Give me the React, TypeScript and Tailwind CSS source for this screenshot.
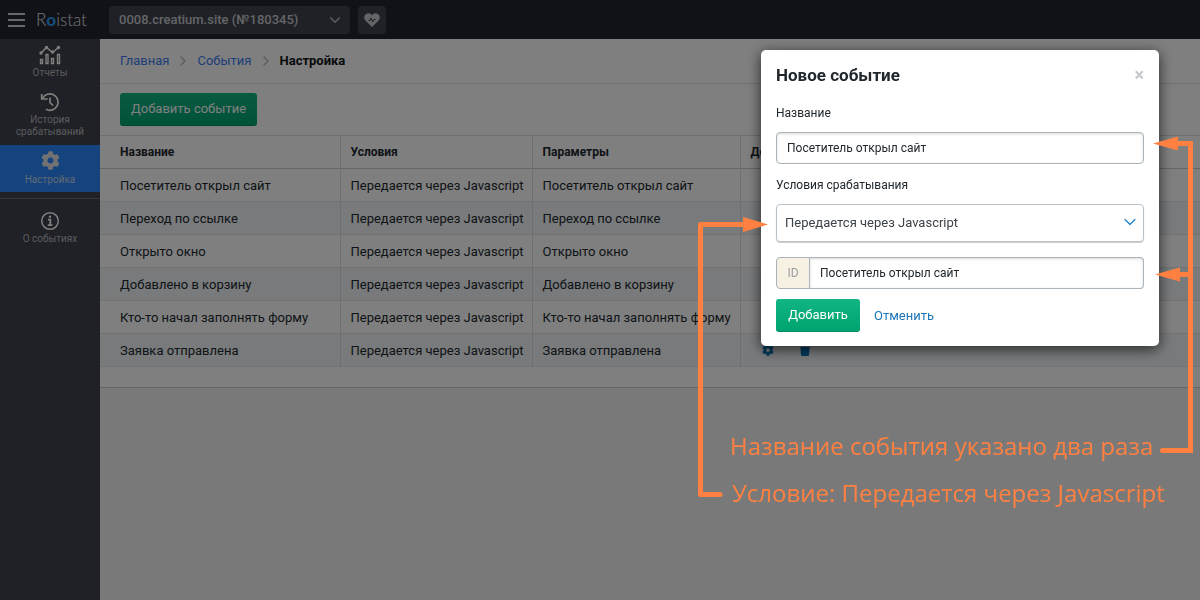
import { ChevronDown, ChevronRight } from 'lucide-react'
import { FaCog, FaTrash } from 'react-icons/fa'

const events = [
  'Посетитель открыл сайт',
  'Переход по ссылке',
  'Открыто окно',
  'Добавлено в корзину',
  'Кто-то начал заполнять форму',
  'Заявка отправлена',
]

function ReportsIcon() {
  return (
    <svg width="22" height="20" viewBox="0 0 22 20" fill="none" stroke="currentColor" strokeWidth="1.4">
      <path d="M1.5 14.5h2v4h-2zM7 9.500h2v9h-2zM12.500 13.500h2v5h-2zM18.500 9.500h2v9h-2z" />
      <path d="M2 8 7.500 2.500l6 5 6-5" strokeWidth="1.6" />
      <circle cx="2" cy="8" r="1.7" fill="currentColor" stroke="none" />
      <circle cx="7.5" cy="2.5" r="1.7" fill="currentColor" stroke="none" />
      <circle cx="13.5" cy="7" r="1.7" fill="currentColor" stroke="none" />
      <circle cx="19.5" cy="2.5" r="1.7" fill="currentColor" stroke="none" />
    </svg>
  )
}

function HistoryIcon() {
  return (
    <svg width="20" height="20" viewBox="0 0 20 20" fill="none" stroke="currentColor" strokeWidth="1.7">
      <path d="M2.500 6.500A8.200 8.200 0 1 1 6 17.300" />
      <path d="M1.700 2v5h6" />
      <path d="M10 5.500v5l3 3" />
    </svg>
  )
}

function InfoIcon() {
  return (
    <svg width="20" height="20" viewBox="0 0 20 20" fill="none" stroke="currentColor" strokeWidth="1.5">
      <circle cx="10" cy="10" r="8.3" />
      <path d="M8 8.700h2.300v5M7.800 14.200h4.600" strokeWidth="1.8" />
      <circle cx="10" cy="5.8" r="1.2" fill="currentColor" stroke="none" />
    </svg>
  )
}

function HeartPulseIcon() {
  return (
    <svg width="16" height="14" viewBox="0 0 16 14">
      <path d="M8 14 1.200 7.200C-.8 4.800.2 1 3.500.4 5.500 0 7.200 1 8 2.300 8.800 1 10.500 0 12.500.4c3.300.6 4.300 4.400 2.300 6.800Z" fill="currentColor" />
      <path d="M4.500 7.500h1.500l1-2.500 1.700 4 1.200-2.500h1.600" fill="none" stroke="#40424c" />
    </svg>
  )
}

function Arrows() {
  return (
    <svg className="absolute top-0 left-0" width="510" height="370" viewBox="0 0 510 370" fill="none" stroke="#ff8040" strokeWidth="5">
      <path d="M30 364.500H10.500V94.500H56" strokeLinecap="round" strokeLinejoin="round" />
      <path d="M472.500 320.500H500.500V13.500H484" strokeLinecap="round" />
      <path d="M482 144.500h18" />
      <g fill="#ff8040" stroke="none">
        <path d="m78 94.500-25-7.500v15z" />
        <path d="m463 13.500 25-7v14z" />
        <path d="m465 144.500 25-7v14z" />
      </g>
    </svg>
  )
}

function Sidebar() {
  return (
    <nav className="w-[100px] shrink-0 bg-[#40424c] text-center text-[10px] leading-3 text-[#b4b6bc]">
      <a href="#reports" className="flex flex-col items-center gap-0.5 py-1.5">
        <span className="text-white"><ReportsIcon /></span>
        Отчеты
      </a>
      <a href="#history" className="flex flex-col items-center gap-0.5 py-[7px]">
        <span className="text-white"><HistoryIcon /></span>
        <span>История срабатываний</span>
      </a>
      <a href="#settings" className="flex h-[47px] flex-col items-center gap-1 bg-[#2a86fc] pt-1.5 text-[#c4d4e8]">
        <FaCog className="size-[19px] text-[#e4e4e4]" />
        Настройка
      </a>
      <hr className="mt-1.5 border-[#686a74]" />
      <a href="#about" className="flex flex-col items-center gap-0.5 pt-3">
        <span className="text-white"><InfoIcon /></span>
        О событиях
      </a>
    </nav>
  )
}

function EventsTable() {
  return (
    <table className="w-full table-fixed border-t border-[#d8dcde] text-left text-[13px] leading-5 text-[#20282e]">
      <colgroup>
        <col className="w-[240px]" />
        <col className="w-[192px]" />
        <col className="w-[208px]" />
        <col />
      </colgroup>
      <thead>
        <tr className="h-[33px] border-b border-[#c8ccce] text-[12px]">
          <th className="border-r border-[#dcdfe1] pl-5">Название</th>
          <th className="border-r border-[#dcdfe1] pl-2.5">Условия</th>
          <th className="border-r border-[#dcdfe1] pl-2.5">Параметры</th>
          <th className="pl-2.5">Действия</th>
        </tr>
      </thead>
      <tbody>
        {events.map((name) => (
          <tr key={name} className="h-[33px] border-b border-[#e2e5e7] even:bg-[#f1f4f6]">
            <td className="border-r border-[#dcdfe1] pt-0.5 pl-5 whitespace-nowrap">{name}</td>
            <td className="border-r border-[#dcdfe1] pt-0.5 pl-2.5 whitespace-nowrap">Передается через Javascript</td>
            <td className="border-r border-[#dcdfe1] pt-0.5 pl-2.5 whitespace-nowrap">{name}</td>
            <td className="pl-[21px] text-[#0077b8]">
              <span className="flex gap-[25px]">
                <button type="button" aria-label="Изменить"><FaCog className="size-3" /></button>
                <button type="button" aria-label="Удалить"><FaTrash className="size-3" /></button>
              </span>
            </td>
          </tr>
        ))}
      </tbody>
    </table>
  )
}

function EventDialog() {
  return (
    <form className="fixed top-[50px] right-[41px] w-[398px] rounded-[5px] bg-white px-[15px] pt-3 pb-3.5 text-[13px] text-[#20282e] shadow-[0_3px_14px_rgba(0,0,0,0.7)]">
      <div className="flex items-center justify-between">
        <h2 className="text-[17px] leading-[26px] font-bold">Новое событие</h2>
        <button type="button" aria-label="Закрыть" className="text-lg leading-5 font-bold text-[#c4c8cc]">×</button>
      </div>
      <label htmlFor="name" className="mt-[15px] block text-[12px] leading-5">Название</label>
      <input id="name" defaultValue="Посетитель открыл сайт" className="mt-[9px] h-8 w-full rounded border border-[#aab4ba] px-2.5 text-[12px] shadow-[inset_0_1px_3px_rgba(0,0,0,0.15)]" />
      <label htmlFor="condition" className="mt-[11px] block text-[12px] leading-5">Условия срабатывания</label>
      <div className="relative mt-[9px]">
        <select id="condition" className="h-[38px] w-full appearance-none rounded border border-[#b8c0c8] px-2 text-[#3c4248] shadow-[0_1px_1px_rgba(0,0,0,0.2)]">
          <option>Передается через Javascript</option>
        </select>
        <ChevronDown className="pointer-events-none absolute top-2 right-1 size-5 text-[#1f83d0]" strokeWidth={1.5} />
      </div>
      <div className="mt-[15px] flex h-8">
        <label htmlFor="event-id" className="flex w-[34px] items-center justify-center rounded-l border border-[#aab4ba] bg-[#f6f1e2] text-[12px] text-[#9a9ea2]">ID</label>
        <input id="event-id" defaultValue="Посетитель открыл сайт" className="min-w-0 flex-1 rounded-r border border-l-0 border-[#aab4ba] px-2.5 text-[12px] shadow-[inset_0_1px_3px_rgba(0,0,0,0.15)]" />
      </div>
      <div className="mt-2.5 flex items-center gap-3.5">
        <button type="submit" className="h-[33px] w-[84px] rounded-[3px] border-b border-[#078a5f] bg-linear-to-b from-[#10b583] to-[#00a471] text-white">Добавить</button>
        <a href="#cancel" className="text-[#1c75b8]">Отменить</a>
      </div>
    </form>
  )
}

export default function App() {
  return (
    <div className="flex min-h-screen flex-col bg-[#f2f2f2] font-['Roboto','Noto_Sans',sans-serif]">
      <header className="flex h-[39px] items-center bg-[#22242e] pl-2 text-[#c8cace]">
        <button type="button" aria-label="Меню" className="flex w-[17px] flex-col gap-1">
          <span className="h-0.5 bg-[#d0d0d0]" />
          <span className="h-0.5 bg-[#d0d0d0]" />
          <span className="h-0.5 bg-[#d0d0d0]" />
        </button>
        <a href="#home" className="ml-[11px] w-[73px] font-['Lato',sans-serif] text-[17px] leading-5 font-light text-[#e4e6ea]">
          R<span className="font-black text-[#2a9ae8]">o</span>istat
        </a>
        <button type="button" className="flex h-7 w-[241px] items-center justify-between rounded bg-[#40424c] pr-1.5 pl-2.5 text-[13px] font-medium">
          0008.creatium.site (№180345)
          <ChevronDown className="size-[18px]" strokeWidth={1.5} />
        </button>
        <button type="button" aria-label="Состояние" className="ml-2 flex size-7 items-center justify-center rounded bg-[#40424c]">
          <HeartPulseIcon />
        </button>
      </header>

      <div className="flex flex-1">
        <Sidebar />
        <main className="min-w-0 flex-1">
          <div className="border-b border-[#cccccc] bg-white pb-5">
            <div className="flex h-[45px] items-center gap-1.5 border-b border-[#e4e4e4] px-5 text-[13px] text-[#3c7cf0]">
              <a href="#home">Главная</a>
              <ChevronRight className="size-4 text-[#b0b4b8]" />
              <a href="#events">События</a>
              <ChevronRight className="size-4 text-[#b0b4b8]" />
              <span className="font-bold text-[#101418]">Настройка</span>
            </div>
            <div className="px-5 py-[9px]">
              <button type="button" className="block h-[33px] w-[137px] rounded-[3px] border-b border-[#078a5f] bg-linear-to-b from-[#10b583] to-[#00a471] text-[13px] text-white">Добавить событие</button>
            </div>
            <EventsTable />
          </div>
        </main>
      </div>

      <div className="fixed inset-0 bg-black/50" />
      <EventDialog />

      {/* Callouts */}
      <div className="pointer-events-none fixed top-[130px] right-0 w-[510px] font-['Open_Sans','Noto_Sans',sans-serif] text-[24px] leading-[34px] font-medium text-[#ff8040]">
        <Arrows />
        <p className="absolute top-[299px] left-10 whitespace-nowrap">Название события указано два раза</p>
        <p className="absolute top-[346px] left-[42px] whitespace-nowrap">Условие: Передается через Javascript</p>
      </div>
    </div>
  )
}
